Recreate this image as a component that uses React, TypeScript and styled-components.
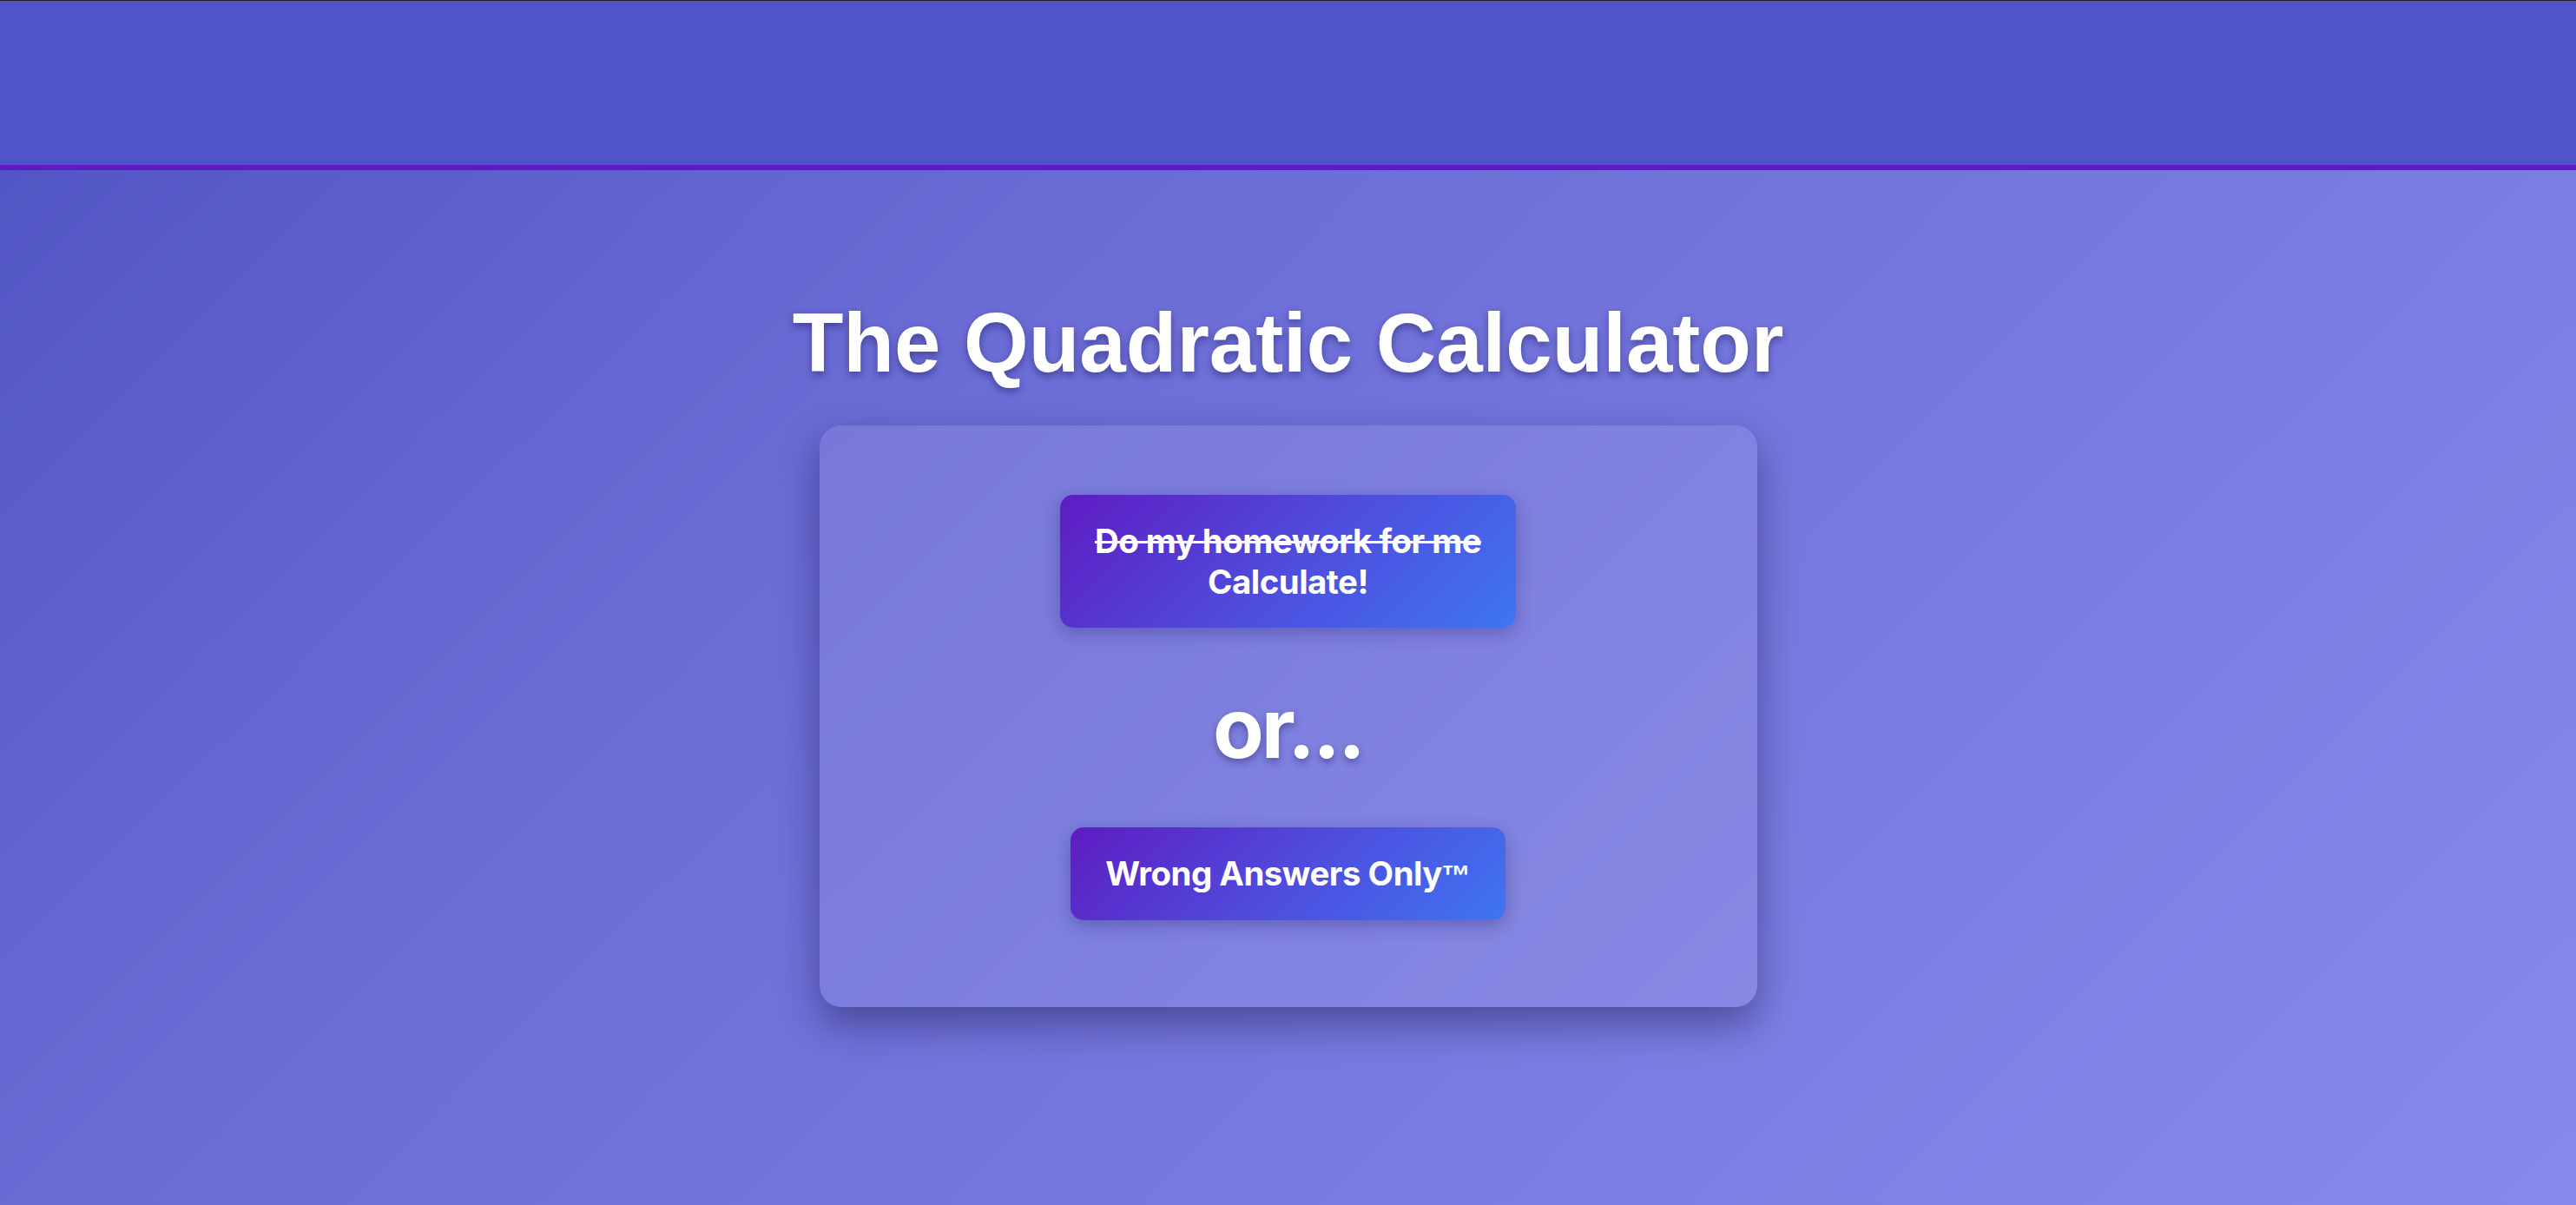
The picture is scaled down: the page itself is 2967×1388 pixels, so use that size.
import React from "react";
import styled, { createGlobalStyle } from "styled-components";

const GlobalStyle = createGlobalStyle`
  html, body {
    margin: 0;
    padding: 0;
    height: 100%;
  }
  body {
    font-family: Inter, "Noto Sans", sans-serif;
    background: #5256c4;
  }
  #root {
    min-height: 100vh;
  }
`;

const Page = styled.div`
  min-height: 100vh;
  display: flex;
  flex-direction: column;
`;

const Header = styled.header`
  height: 189px;
  background: #4f55c9;
  border-top: 1px solid #1e1e2a;
  border-bottom: 6px solid #5c1bc4;
  flex-shrink: 0;
`;

const Main = styled.main`
  flex: 1;
  display: flex;
  flex-direction: column;
  align-items: center;
  padding: 144px 0 60px;
  background: linear-gradient(135deg, #5256c4 0%, #6a6bd5 30%, #878aec 100%);
`;

const Title = styled.h1`
  margin: 0 0 40px;
  font-family: "Liberation Sans", Arial, sans-serif;
  font-weight: 700;
  font-size: 96px;
  line-height: 110px;
  color: #ffffff;
  text-shadow: 0 4px 8px rgba(20, 20, 80, 0.45);
  text-align: center;
`;

const Card = styled.section`
  width: 1080px;
  box-sizing: border-box;
  padding: 80px 0 100px;
  display: flex;
  flex-direction: column;
  align-items: center;
  background: rgba(255, 255, 255, 0.09);
  border-radius: 25px;
  box-shadow: 0 20px 45px rgba(20, 20, 70, 0.45);
`;

const GradientButton = styled.button`
  font-family: Inter, "Noto Sans", sans-serif;
  font-weight: 700;
  font-size: 38.4px;
  line-height: 46.5px;
  letter-spacing: -0.5px;
  color: #ffffff;
  padding: 30px 40px;
  border: none;
  border-radius: 15px;
  background: linear-gradient(135deg, #5e1cc3 0%, #4f4bdd 50%, #3e75f3 100%);
  box-shadow: 0 6px 20px rgba(30, 20, 90, 0.3);
  text-align: center;
  cursor: pointer;
`;

const Struck = styled.s`
  text-decoration-thickness: 3px;
`;

const Trademark = styled.span`
  font-family: "Liberation Sans", Arial, sans-serif;
  font-weight: 700;
  font-size: 0.88em;
  line-height: 0;
  letter-spacing: 0;
  margin-left: -1px;
`;

const Or = styled.h2`
  margin: 57px 0;
  font-family: Inter, "Noto Sans", sans-serif;
  font-weight: 700;
  font-size: 96px;
  line-height: 116px;
  letter-spacing: -3px;
  font-feature-settings: "calt" 0, "liga" 0;
  color: #ffffff;
  text-shadow: 0 4px 8px rgba(20, 20, 80, 0.4);
`;

export default function App() {
  return (
    <>
      <GlobalStyle />
      <Page>
        <Header />
        <Main>
          <Title>The Quadratic Calculator</Title>
          <Card>
            <GradientButton>
              <Struck>Do my homework for me</Struck>
              <br />
              Calculate!
            </GradientButton>
            <Or>or...</Or>
            <GradientButton>
              Wrong Answers Only<Trademark>™</Trademark>
            </GradientButton>
          </Card>
        </Main>
      </Page>
    </>
  );
}
